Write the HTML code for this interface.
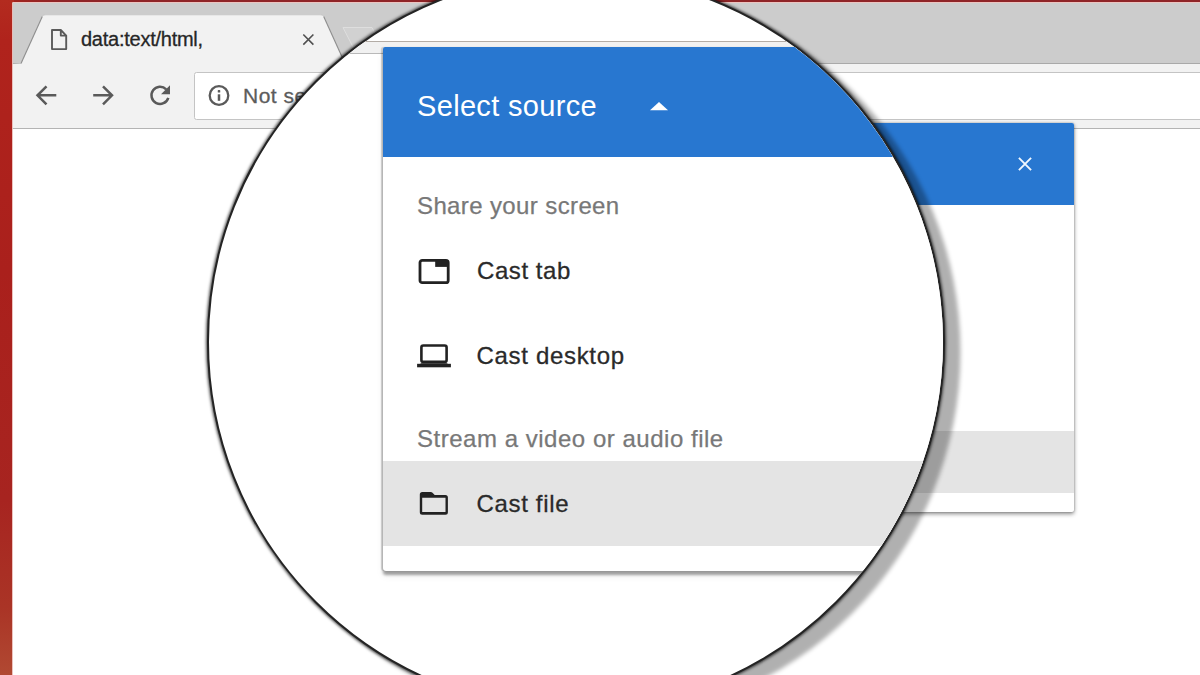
<!DOCTYPE html>
<html lang="en">
<head>
<meta charset="utf-8">
<title>Cast - Select source</title>
<style>
  html, body { margin: 0; padding: 0; }
  body {
    width: 1200px; height: 675px; overflow: hidden; position: relative;
    font-family: "Liberation Sans", sans-serif;
    background: linear-gradient(180deg, #b32b1f 0%, #b0231c 6%, #aa201c 40%, #a72420 74%, #aa3426 90%, #b14932 100%);
  }
  .abs { position: absolute; }
  /* ---------- browser window ---------- */
  #topstrip { left: 14px; top: 0; width: 1186px; height: 3px; background: linear-gradient(90deg, #a0241f 0%, #8f2427 4%, #8f2427 100%); }
  #win { left: 12px; top: 2px; width: 1188px; height: 673px; background: #ffffff; overflow: hidden; border-radius: 2px 0 0 0; }
  #winedge { left: 0; top: 0; width: 1188px; height: 673px; border-top: 1.500px solid #f0c4bf; border-left: 1.500px solid #ecbcb7; border-radius: 2px 0 0 0; box-sizing: border-box; opacity: .9; }
  #titlebar { left: 0; top: 0; width: 1188px; height: 61px; background: #cccccc; }
  #toolbar { left: 0; top: 61px; width: 1188px; height: 64px; background: #f2f2f2; border-top: 1px solid #a9a9a9; border-bottom: 1px solid #b4b4b4; }
  #tabsvg { left: 0; top: 0; }
  #tabtitle { left: 69px; top: 25.300px; letter-spacing: -.25px; font-size: 20px; line-height: 24px; color: #262626; -webkit-text-stroke: .3px #262626; white-space: nowrap; }
  #urlbar { left: 182px; top: 70px; width: 1010px; height: 46px; background: #ffffff; border: 1px solid #c4c4c4; border-radius: 2.500px; }
  #urltext { left: 231px; top: 81px; letter-spacing: .5px; font-size: 21px; line-height: 26px; color: #5c5c5c; -webkit-text-stroke: .3px #5c5c5c; white-space: nowrap; }
  /* ---------- small dialog ---------- */
  #dlg { left: 420px; top: 121px; width: 642px; height: 389px; background: #ffffff; box-shadow: 0 2px 4px rgba(0,0,0,.45), 0 0 2px rgba(0,0,0,.3); border-radius: 2px; }
  #dlg .hd { left: 0; top: 0; width: 642px; height: 82px; background: #2877d0; border-radius: 2px 2px 0 0; }
  #dlg .hl { left: 0; top: 308px; width: 642px; height: 62px; background: #e4e4e4; }
  /* ---------- magnifier ---------- */
  #lens {
    left: 207.150px; top: -27px; width: 734px; height: 734px; border-radius: 50%;
    border: 2px solid #242424; background: #ffffff; overflow: hidden;
    box-shadow: 0 0 3px 1px rgba(0,0,0,.72), 15px 10px 4px 0.500px rgba(0,0,0,.31);
  }
  #lensin { left: -209.150px; top: 25px; width: 1200px; height: 675px; }
  #zbar { left: 0; top: 41px; width: 1200px; height: 11px; background: #f1f1f1; border-top: 1px solid #b3aca6; border-bottom: 1px solid #b9b9b9; }
  #zdlg { left: 383px; top: 47px; width: 860px; height: 524px; background: #ffffff; border-radius: 2px 0 0 3px; box-shadow: -1.200px 0 1px rgba(0,0,0,.16), 0 4px 3px rgba(0,0,0,.36), 0 5px 8px rgba(0,0,0,.06); }
  #zdlg .hd { left: 0; top: 0; width: 860px; height: 110px; background: #2877d0; border-radius: 2px 0 0 0; }
  #zdlg .hl { left: 0; top: 414px; width: 860px; height: 85px; background: #e4e4e4; }
  .zt { white-space: nowrap; line-height: 30px; }
  #t1 { left: 34px; top: 44px; font-size: 29px; color: #ffffff; letter-spacing: .33px; }
  .sub { font-size: 24px; color: #787878; -webkit-text-stroke: .25px #787878; }
  .itm { font-size: 24px; color: #2a2a2a; -webkit-text-stroke: .3px #2a2a2a; }
  #t2 { left: 34px; top: 144px; letter-spacing: .38px; }
  #t3 { left: 94px; top: 209px; letter-spacing: .57px; }
  #t4 { left: 93.500px; top: 294px; letter-spacing: .68px; }
  #t5 { left: 34px; top: 377px; letter-spacing: .52px; }
  #t6 { left: 93.500px; top: 442px; letter-spacing: .66px; }
</style>
</head>
<body>

<div id="topstrip" class="abs"></div>
<div id="win" class="abs">
  <div id="titlebar" class="abs"></div>
  <div id="toolbar" class="abs"></div>
  <div id="winedge" class="abs"></div>

  <!-- tab shape, new-tab button, icons -->
  <svg id="tabsvg" class="abs" width="1188" height="131" viewBox="12 2 1188 131">
    <!-- new tab button -->
    <path d="M343 27.500 L372 27.500 L382 47 L353 47 Z" fill="#d1d1d1" stroke="#dedede" stroke-width="1"/>
    <!-- active tab -->
    <path d="M12 64 L21 63.500 L42.300 16.500 Q43.300 14.800 45.500 14.800 L320.500 14.800 Q322.700 14.800 323.700 16.500 L345 63.500 L360 64 Z" fill="#f2f2f2"/>
    <path d="M21 63.500 L42.300 16.500" fill="none" stroke="#8e8e8e" stroke-width="1.100"/>
    <path d="M323.700 16.500 L345 63.500" fill="none" stroke="#8e8e8e" stroke-width="1.100"/>
    <path d="M42.300 16.500 Q43.300 14.800 45.500 14.800 L320.500 14.800 Q322.700 14.800 323.700 16.500" fill="none" stroke="#c4c4c4" stroke-width="1" opacity=".8"/>
    <!-- page icon -->
    <path d="M52 30 L60.800 30 L66.200 35.600 L66.200 49.100 L52 49.100 Z M60.800 30 L60.800 35.600 L66.200 35.600" fill="none" stroke="#5a5a5a" stroke-width="1.900" stroke-linejoin="round"/>
    <!-- tab close -->
    <path d="M303.300 34.500 L313.400 44.600 M313.400 34.500 L303.300 44.600" stroke="#505050" stroke-width="1.600" fill="none"/>
    <!-- back -->
    <path d="M56.300 95.300 L38 95.300 M46.500 86.300 L37.500 95.300 L46.500 104.300" stroke="#5a5a5a" stroke-width="2.500" fill="none"/>
    <!-- forward -->
    <path d="M93.200 95.300 L111.500 95.300 M103 86.300 L112 95.300 L103 104.300" stroke="#5a5a5a" stroke-width="2.500" fill="none"/>
    <!-- reload -->
    <path d="M166.200 89.300 A 8.600 8.600 0 1 0 168.300 97.800" stroke="#5a5a5a" stroke-width="2.500" fill="none"/>
    <path d="M170 85.200 L170 94.200 L161 94.200 Z" fill="#5a5a5a"/>
  </svg>

  <div id="tabtitle" class="abs">data:text/html,</div>
  <div id="urlbar" class="abs"></div>
  <svg class="abs" style="left:194.800px;top:82.300px" width="24" height="24" viewBox="0 0 24 24">
    <circle cx="12" cy="11.500" r="9.300" fill="none" stroke="#5a5a5a" stroke-width="2.300"/>
    <rect x="10.750" y="10.300" width="2.500" height="6.500" fill="#5a5a5a"/>
    <rect x="10.750" y="6.100" width="2.500" height="2.500" rx=".6" fill="#5a5a5a"/>
  </svg>
  <div id="urltext" class="abs">Not secure</div>

  <!-- the real (small) dialog -->
  <div id="dlg" class="abs">
    <div class="hd abs"></div>
    <svg class="abs" style="left:584.500px;top:32.700px" width="16" height="16" viewBox="0 0 16 16">
      <path d="M1.900 1.900 L14.100 14.100 M14.100 1.900 L1.900 14.100" stroke="#f0f7ff" stroke-width="1.900" fill="none"/>
    </svg>
    <div class="hl abs"></div>
  </div>
</div>

<!-- magnifier lens -->
<div id="lens" class="abs">
  <div id="lensin" class="abs">
    <div id="zbar" class="abs"></div>
    <div id="zdlg" class="abs">
      <div class="hd abs"></div>
      <div id="t1" class="zt abs">Select source</div>
      <svg class="abs" style="left:266px;top:54px" width="20" height="12" viewBox="0 0 20 12">
        <path d="M1 9.300 L10 1 L19 9.300 Z" fill="#ffffff"/>
      </svg>
      <div id="t2" class="zt sub abs">Share your screen</div>

      <!-- cast tab icon -->
      <svg class="abs" style="left:34px;top:210px" width="36" height="30" viewBox="0 0 36 30">
        <rect x="3" y="3.300" width="28.200" height="22.400" rx="2.300" fill="none" stroke="#222222" stroke-width="2.800"/>
        <rect x="18.200" y="3.300" width="13" height="6.600" fill="#222222"/>
      </svg>
      <div id="t3" class="zt itm abs">Cast tab</div>

      <!-- cast desktop icon -->
      <svg class="abs" style="left:32px;top:295px" width="40" height="28" viewBox="0 0 40 28">
        <rect x="6.400" y="3.500" width="25.200" height="16.400" rx="2" fill="none" stroke="#222222" stroke-width="2.600"/>
        <path d="M7 20.500 L31 20.500 L33 22 L5 22 Z" fill="#222222" opacity=".75"/>
        <rect x="2.100" y="21.800" width="33.800" height="3.500" fill="#222222"/>
      </svg>
      <div id="t4" class="zt itm abs">Cast desktop</div>

      <div id="t5" class="zt sub abs">Stream a video or audio file</div>
      <div class="hl abs"></div>

      <!-- folder icon -->
      <svg class="abs" style="left:34px;top:443px" width="36" height="28" viewBox="0 0 36 28">
        <path fill-rule="evenodd" d="M2.800 4.500 Q2.800 2 5.300 2 L13.800 2 Q14.800 2 15.500 2.700 L17.700 5.100 L28.400 5.100 Q30.900 5.100 30.900 7.600 L30.900 22.200 Q30.900 24.700 28.400 24.700 L5.300 24.700 Q2.800 24.700 2.800 22.200 Z M5.200 7.800 L28.500 7.800 L28.500 22.100 L5.200 22.100 Z" fill="#222222"/>
      </svg>
      <div id="t6" class="zt itm abs">Cast file</div>
    </div>
  </div>
</div>

</body>
</html>
